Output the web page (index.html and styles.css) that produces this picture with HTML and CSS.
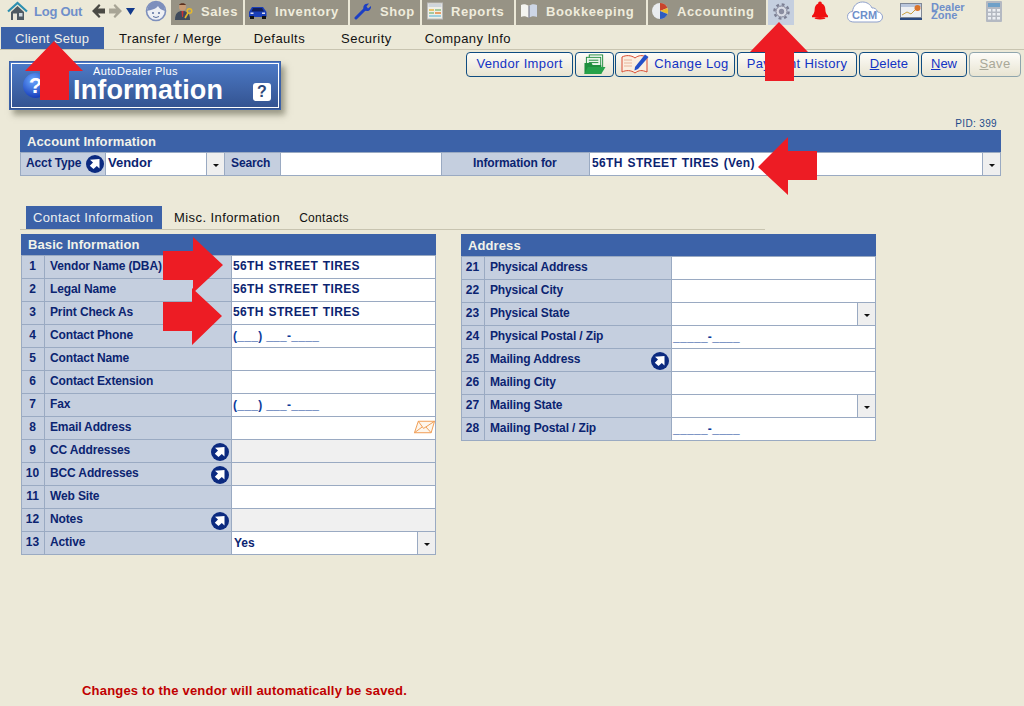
FILE: index.html
```html
<!DOCTYPE html>
<html lang="en">
<head>
<meta charset="utf-8">
<title>Information</title>
<link rel="stylesheet" href="styles.css">
</head>
<body>
<svg class="defs" width="0" height="0" aria-hidden="true">
  <symbol id="go" viewBox="0 0 18 18">
    <circle cx="9" cy="9" r="9" fill="#0b2a80"/>
    <path d="M4 4.800 L13.500 4 L13.500 13.500 L10.800 11 L7.500 14 L3.800 10.800 L7 7.500 Z" fill="#fff"/>
  </symbol>
</svg>

<header class="topbar">
  <svg class="ic-house" width="21" height="20" viewBox="0 0 21 20"><path d="M1 10.500 L10.500 2 L20 10.500" fill="none" stroke="#2c8fb0" stroke-width="2.200"/><path d="M4 11 L10.500 5 L17 11 V19 H4 Z" fill="#4e5a63"/><rect x="6" y="12.500" width="4" height="6.500" fill="#e8e6da"/><rect x="12" y="12" width="3.500" height="3.500" fill="#cfd8e0"/></svg>
  <span class="logout">Log Out</span>
  <svg class="ic-nav" width="44" height="16" viewBox="0 0 44 16"><path d="M0 8 L7 1 L8.500 2.500 L6 5.500 H13 V10.500 H6 L8.500 13.500 L7 15 Z" fill="#4a4a44"/><path d="M30 8 L23 1 L21.500 2.500 L24 5.500 H17 V10.500 H24 L21.500 13.500 L23 15 Z" fill="#a8a596"/><path d="M34 5 H43 L38.500 12 Z" fill="#123a8c"/></svg>
  <svg class="ic-face" width="22" height="22" viewBox="0 0 22 22"><circle cx="11" cy="11" r="9.500" fill="#eef0f4" stroke="#7d8fbc" stroke-width="1.600"/><path d="M2 11 C3 3 9 1 12 2 C17 2 20 6 20 11 C16 10 14 8 13 6 C11 9 6 10 2 11 Z" fill="#7d8fbc"/><circle cx="8" cy="13" r="1" fill="#5a6f9f"/><circle cx="14" cy="13" r="1" fill="#5a6f9f"/><path d="M8 16.500 Q11 18.500 14 16.500" stroke="#5a6f9f" fill="none"/></svg>

  <nav class="tiles">
    <a class="tile tile-sales"><svg width="18" height="18" viewBox="0 0 18 18"><circle cx="7.500" cy="5" r="3.500" fill="#c89a74"/><path d="M4 3 C5 0.500 10 0.500 11 3 Z" fill="#5a3020"/><path d="M0 18 C0 11 3 9 7.500 9 C12 9 15 11 15 18 Z" fill="#3e4a5c"/><path d="M6.500 9 H8.500 L8 15 H7 Z" fill="#c33"/><circle cx="14.500" cy="9" r="2.300" fill="none" stroke="#e5b82c" stroke-width="1.500"/><path d="M13 11 L10 16" stroke="#e5b82c" stroke-width="1.600"/></svg><span>Sales</span></a>
    <a class="tile tile-inventory"><svg width="18" height="18" viewBox="0 0 18 18"><path d="M0 10 L3 5 H14 L17.500 10 V15 H0 Z" fill="#1a3fb8"/><path d="M4 6 H13 L15 9.500 H2.500 Z" fill="#14205a"/><rect x="1" y="14" width="4" height="3" fill="#111"/><rect x="13" y="14" width="4" height="3" fill="#111"/><rect x="1.500" y="10.500" width="3" height="1.500" fill="#dde"/><rect x="13" y="10.500" width="3" height="1.500" fill="#dde"/></svg><span>Inventory</span></a>
    <a class="tile tile-shop"><svg width="18" height="18" viewBox="0 0 18 18"><path d="M2 16 L11 7" stroke="#1c3fc4" stroke-width="3" stroke-linecap="round"/><path d="M10 8 C8 4 11 1 15 1.500 L12.500 4.500 L14 6.500 L17 4 C17.500 8 14 10.500 10 8 Z" fill="#1c3fc4"/></svg><span>Shop</span></a>
    <a class="tile tile-reports"><svg width="16" height="18" viewBox="0 0 16 18"><rect x="0.500" y="1" width="15" height="16" fill="#f0efe6" stroke="#bbb"/><rect x="1.500" y="2" width="13" height="3" fill="#cfd5dc"/><rect x="2" y="7" width="5" height="2" fill="#e9c46a"/><rect x="8" y="7" width="6" height="2" fill="#a6c9a0"/><rect x="2" y="10" width="5" height="2" fill="#a6c9a0"/><rect x="8" y="10" width="6" height="2" fill="#e9a06a"/><rect x="2" y="13" width="12" height="2" fill="#9ecfe0"/></svg><span>Reports</span></a>
    <a class="tile tile-book"><svg width="18" height="18" viewBox="0 0 18 18"><path d="M9 4 C6 2 3 2 1 3 V15 C3 14 6 14 9 16 Z" fill="#f4f4f0"/><path d="M9 4 C11 2 14 1.500 17 3 V15 C14 13.500 11 14 9 16 Z" fill="#cdd6e6"/><path d="M9 4 V16" stroke="#667" stroke-width="1"/></svg><span>Bookkeeping</span></a>
    <a class="tile tile-acct"><svg width="18" height="18" viewBox="0 0 18 18"><circle cx="9" cy="9" r="8" fill="#e9ecef"/><path d="M9 9 V1 A8 8 0 0 1 16.500 6 Z" fill="#c8442c"/><path d="M9 9 L16.500 6 A8 8 0 0 1 16.500 12 Z" fill="#e8bc2c"/><path d="M9 9 L16.500 12 A8 8 0 0 1 9 17 Z" fill="#2c5cc0"/></svg><span>Accounting</span></a>
    <a class="tile-gear"><svg width="19" height="19" viewBox="0 0 20 20"><circle cx="10" cy="10" r="7.500" fill="none" stroke="#7c7f93" stroke-width="2.400" stroke-dasharray="3 2.890"/><circle cx="10" cy="10" r="5.800" fill="#d8dbe4" stroke="#7c7f93"/><circle cx="10" cy="10" r="2.800" fill="#8a8da0"/></svg></a>
  </nav>

  <svg class="ic-bell" width="16" height="19" viewBox="0 0 18 20"><path d="M9 0 C10.500 0 11 1 11 2 C14 3 15 6 15 9 C15 12 16 14 18 16 V17.500 H0 V16 C2 14 3 12 3 9 C3 6 4 3 7 2 C7 1 7.500 0 9 0 Z" fill="#f01010"/><ellipse cx="9" cy="18.700" rx="6" ry="1.300" fill="#f01010"/></svg>
  <span class="crm"><svg width="36" height="22" viewBox="0 0 36 22"><path d="M7 21 C2 21 0.500 18 0.500 15.500 C0.500 12.500 3 10.500 5.500 10.500 C6 5 10 1 15.500 1 C20 1 23.500 3.500 25 7 C27 6.500 30 8 30.500 11 C33.500 11 35.500 13.500 35.500 16 C35.500 19 33 21 30 21 Z" fill="#fff" stroke="#8ea0cc"/></svg><b>CRM</b></span>
  <svg class="ic-zone" width="22" height="17" viewBox="0 0 22 17"><rect x="0.500" y="0.500" width="21" height="14" fill="#eef0f2" stroke="#7f8896"/><rect y="15" width="22" height="2" fill="#2b4a80"/><rect x="1" y="1" width="20" height="3" fill="#b9c6dc"/><path d="M2 12 L7 9 L11 11 L16 6" stroke="#c9a040" fill="none"/><circle cx="17.500" cy="5" r="3" fill="#d9742c"/></svg>
  <span class="zone">Dealer<br>Zone</span>
  <svg class="ic-calc" width="16" height="21" viewBox="0 0 16 21"><rect width="16" height="21" rx="1" fill="#b4b9c2"/><rect x="2" y="2" width="12" height="4" fill="#6fa0c8"/><g fill="#eceff3"><rect x="2" y="8" width="3" height="2.500"/><rect x="6.500" y="8" width="3" height="2.500"/><rect x="11" y="8" width="3" height="2.500"/><rect x="2" y="12" width="3" height="2.500"/><rect x="6.500" y="12" width="3" height="2.500"/><rect x="11" y="12" width="3" height="2.500"/><rect x="2" y="16" width="3" height="2.500"/><rect x="6.500" y="16" width="3" height="2.500"/><rect x="11" y="16" width="3" height="2.500"/></g></svg>
</header>

<nav class="subnav">
  <a class="subtab subtab-on">Client Setup</a>
  <a class="subtab">Transfer / Merge</a>
  <a class="subtab">Defaults</a>
  <a class="subtab">Security</a>
  <a class="subtab">Company Info</a>
</nav>

<section class="titlerow">
  <div class="banner">
    <svg class="banner-ball" width="25" height="25" viewBox="0 0 25 25"><defs><radialGradient id="ball" cx=".4" cy=".3" r=".8"><stop offset="0" stop-color="#6aa8ff"/><stop offset="1" stop-color="#0c2fb0"/></radialGradient></defs><circle cx="12.500" cy="12.500" r="12.500" fill="url(#ball)"/><text x="12.500" y="20" text-anchor="middle" class="ball-q">?</text></svg>
    <div class="banner-text">
      <span class="banner-sub">AutoDealer Plus</span>
      <span class="banner-main">Information</span>
    </div>
    <span class="banner-help">?</span>
  </div>
  <div class="toolbar">
    <button class="btn btn-import"><span>Vendor Import</span></button>
    <button class="btn btn-folder"><svg width="22" height="21" viewBox="0 0 23 21"><rect x="5.500" y="0.500" width="14" height="13" fill="#fff" stroke="#1e8a3c"/><rect x="2.500" y="3" width="15" height="12" fill="#eaf6ea" stroke="#1e8a3c"/><path d="M5 6 H15 M5 8.500 H15" stroke="#1e8a3c"/><path d="M0.500 9 H8 L9 11 H18 V20.500 H0.500 Z" fill="#1f8f3e"/><path d="M4 13 H22.500 L18 20.500 H0.500 Z" fill="#27a24a"/></svg></button>
    <button class="btn btn-log"><svg width="28" height="21" viewBox="0 0 28 21"><path d="M1 4 C5 2 10 2 14 5 C18 2 21 2 26 4 V19 C21 17 18 17 14 20 C10 17 5 17 1 19 Z" fill="#fbeee0" stroke="#d94a30"/><path d="M3 7 H11 M3 10 H11 M3 13 H11" stroke="#e8b49a"/><path d="M14 14 L24 1.500 L27.500 4 L17 16 L13.500 17.500 Z" fill="#2450c8"/></svg><span>Change Log</span></button>
    <button class="btn btn-pay"><span>Payment History</span></button>
    <button class="btn btn-del"><span><u>D</u>elete</span></button>
    <button class="btn btn-new"><span><u>N</u>ew</span></button>
    <button class="btn btn-save"><span><u>S</u>ave</span></button>
  </div>
</section>

<p class="pid">PID: 399</p>

<section class="account">
  <h2 class="bar bar-acct">Account Information</h2>
  <div class="acct-grid">
    <div class="cell acct-type">Acct Type<svg class="go go-acct" width="18" height="18"><use href="#go"/></svg></div>
    <div class="val val-sel">Vendor</div>
    <div class="dd"><i></i></div>
    <div class="cell acct-search">Search</div>
    <div class="val"></div>
    <div class="cell acct-for">Information for</div>
    <div class="val val-sel val-name">56TH STREET TIRES (Ven)</div>
    <div class="dd"><i></i></div>
  </div>
</section>

<nav class="tabs">
  <a class="tab tab-on">Contact Information</a>
  <a class="tab tab-misc">Misc. Information</a>
  <a class="tab tab-contacts">Contacts</a>
</nav>

<main class="forms">
  <section class="form form-basic">
    <h2 class="bar bar-basic">Basic Information</h2>
    <div class="grid">
      <div class="num">1</div><div class="lab">Vendor Name (DBA)</div><div class="val val-name">56TH STREET TIRES</div>
      <div class="num">2</div><div class="lab">Legal Name</div><div class="val val-name">56TH STREET TIRES</div>
      <div class="num">3</div><div class="lab">Print Check As</div><div class="val val-name">56TH STREET TIRES</div>
      <div class="num">4</div><div class="lab">Contact Phone</div><div class="val val-mask">(___) ___-____</div>
      <div class="num">5</div><div class="lab">Contact Name</div><div class="val"></div>
      <div class="num">6</div><div class="lab">Contact Extension</div><div class="val"></div>
      <div class="num">7</div><div class="lab">Fax</div><div class="val val-mask">(___) ___-____</div>
      <div class="num">8</div><div class="lab">Email Address</div><div class="val val-mail"><svg width="21" height="14" viewBox="0 0 22 14"><path d="M4.500 1 H21.500 L18 13 H0.500 Z" fill="#fdf6ec" stroke="#ef9a50"/><path d="M4.500 1 L10 8.500 L21.500 1 M0.500 13 L8.500 7 M18 13 L12.500 7" fill="none" stroke="#ef9a50"/></svg></div>
      <div class="num">9</div><div class="lab lab-go">CC Addresses<svg class="go" width="18" height="18"><use href="#go"/></svg></div><div class="val val-off"></div>
      <div class="num">10</div><div class="lab lab-go">BCC Addresses<svg class="go" width="18" height="18"><use href="#go"/></svg></div><div class="val val-off"></div>
      <div class="num">11</div><div class="lab">Web Site</div><div class="val"></div>
      <div class="num">12</div><div class="lab lab-go">Notes<svg class="go" width="18" height="18"><use href="#go"/></svg></div><div class="val val-off"></div>
      <div class="num">13</div><div class="lab">Active</div><div class="val val-select"><span>Yes</span><div class="dd"><i></i></div></div>
    </div>
  </section>

  <section class="form form-addr">
    <h2 class="bar bar-addr">Address</h2>
    <div class="grid">
      <div class="num">21</div><div class="lab">Physical Address</div><div class="val"></div>
      <div class="num">22</div><div class="lab">Physical City</div><div class="val"></div>
      <div class="num">23</div><div class="lab">Physical State</div><div class="val val-select"><span></span><div class="dd"><i></i></div></div>
      <div class="num">24</div><div class="lab">Physical Postal / Zip</div><div class="val val-mask">_____-____</div>
      <div class="num">25</div><div class="lab lab-go">Mailing Address<svg class="go" width="18" height="18"><use href="#go"/></svg></div><div class="val"></div>
      <div class="num">26</div><div class="lab">Mailing City</div><div class="val"></div>
      <div class="num">27</div><div class="lab">Mailing State</div><div class="val val-select"><span></span><div class="dd"><i></i></div></div>
      <div class="num">28</div><div class="lab">Mailing Postal / Zip</div><div class="val val-mask">_____-____</div>
    </div>
  </section>
</main>

<p class="notice">Changes to the vendor will automatically be saved.</p>

<svg class="callouts" width="1024" height="706" viewBox="0 0 1024 706" aria-hidden="true">
  <g fill="#ed1c24">
    <polygon points="54,41 83,71 69,71 69,100 40,100 40,71 25,71"/>
    <polygon points="779,22 808,52 794,52 794,81 765,81 765,52 750,52"/>
    <polygon points="758,167 788,137 788,151 817,151 817,180 788,180 788,195"/>
    <polygon points="223,265 193,237 193,251 163,251 163,280 193,280 193,293"/>
    <polygon points="222,316 192,288 192,302 163,302 163,331 192,331 192,345"/>
  </g>
</svg>
</body>
</html>
```

FILE: styles.css
```css
* { box-sizing: border-box; }
html, body { margin: 0; padding: 0; }
body {
  position: relative;
  width: 1024px;
  height: 706px;
  overflow: hidden;
  background: #ece9d8;
  font-family: "Liberation Sans", Arial, sans-serif;
  font-size: 12px;
  color: #0b2471;
}
.defs { position: absolute; }
h2, p { margin: 0; }

/* top bar */
.topbar { display: flex; align-items: center; height: 25px; padding-left: 7px; }
.ic-house { flex: none; margin-bottom: 3px; }
.logout { flex: none; margin-left: 6px; width: 52px; font-size: 13px; font-weight: bold; letter-spacing: -0.25px; color: #6f8fca; margin-bottom: 3px; white-space: nowrap; }
.ic-nav { flex: none; margin-left: 6px; margin-bottom: 3px; }
.ic-face { flex: none; margin-left: 9px; margin-bottom: 3px; }
.tiles { display: flex; gap: 2px; margin-left: 4px; height: 25px; }
.tile {
  display: flex;
  align-items: center;
  gap: 8px;
  padding: 0 0 3px 4px;
  height: 25px;
  background: #979385;
  color: #efecdc;
  font-size: 13px;
  font-weight: bold;
  letter-spacing: 0.6px;
}
.tile-sales { width: 72px; }
.tile-inventory { width: 103px; }
.tile-shop { width: 70px; }
.tile-reports { width: 92px; padding-left: 5px; }
.tile-book { width: 130px; }
.tile-acct { width: 118px; padding-left: 3px; }
.tile-gear {
  display: flex;
  align-items: center;
  justify-content: center;
  width: 26px;
  height: 25px;
  padding-bottom: 3px;
  background: #c5cfdf;
}
.ic-bell { flex: none; margin-left: 18px; margin-bottom: 4px; }
.crm { position: relative; flex: none; margin-left: 19px; width: 36px; height: 24px; }
.crm svg { display: block; }
.crm b { position: absolute; left: 5px; top: 8px; font-size: 11px; color: #6f8fca; }
.ic-zone { flex: none; margin-left: 17px; margin-bottom: 3px; }
.zone { flex: none; margin-left: 9px; width: 55px; font-size: 11px; font-weight: bold; line-height: 8px; color: #6f8fca; margin-bottom: 4px; }
.ic-calc { flex: none; margin-bottom: 3px; }

/* sub nav */
.subnav {
  display: flex;
  gap: 1px;
  height: 23px;
  margin-top: 2px;
  padding-left: 1px;
  border-bottom: 1px solid #c8c4b0;
}
.subtab {
  height: 22px;
  padding: 0 14px;
  font-size: 13px;
  line-height: 23px;
  letter-spacing: 0.45px;
  color: #111;
}
.subtab:nth-child(3) { margin-left: 3px; }
.subtab:nth-child(4) { margin-left: 7px; }
.subtab:nth-child(5) { margin-left: 4px; }
.subtab-on { width: 103px; background: #3c62a8; color: #f0f0e8; letter-spacing: 0.28px; white-space: nowrap; }

/* title row */
.titlerow { display: flex; align-items: flex-start; height: 60px; }
.banner {
  display: flex;
  align-items: center;
  position: relative;
  width: 272px;
  height: 49px;
  margin: 11px 0 0 9px;
  padding-left: 13px;
  background: linear-gradient(#4d7bc8, #33528f);
  border: 1px solid #3c62a8;
  outline: 1px solid #fff;
  outline-offset: -3px;
  box-shadow: 4px 5px 6px rgba(90, 90, 70, .55);
  color: #fff;
}
.banner-ball { flex: none; }
.ball-q { fill: #fff; font-size: 22px; font-weight: bold; }
.banner-text { display: flex; flex-direction: column; margin-left: 25px; margin-top: -1px; }
.banner-sub { font-size: 11px; line-height: 11px; margin-left: 20px; letter-spacing: .35px; }
.banner-main { font-size: 27px; font-weight: bold; line-height: 27px; letter-spacing: .15px; }
.banner-help {
  position: absolute;
  right: 9px;
  top: 21px;
  width: 18px;
  height: 18px;
  border-radius: 3px;
  background: #fff;
  color: #2d4778;
  font-size: 16px;
  font-weight: bold;
  line-height: 18px;
  text-align: center;
}
.toolbar { display: flex; gap: 2px; margin: 2px 3px 0 auto; }
.btn {
  display: flex;
  align-items: center;
  justify-content: center;
  gap: 5px;
  height: 25px;
  padding: 0 0 2px;
  border: 1.5px solid #0f4c81;
  border-radius: 4px;
  background: linear-gradient(#fdfcf8, #e8e4d2);
  color: #1233c4;
  font-family: inherit;
  font-size: 13px;
  letter-spacing: 0.35px;
}
.btn-import { width: 107px; }
.btn-folder { width: 39px; padding: 0; }
.btn-log { width: 120px; margin-left: -1px; }
.btn-pay { width: 120px; }
.btn-del { width: 60px; letter-spacing: .15px; }
.btn-new { width: 46px; letter-spacing: 0; }
.btn-save { width: 52px; color: #a9a898; border-color: #8fa5ad; }

.pid { height: 20px; padding: 8px 27px 0 0; text-align: right; font-size: 10px; line-height: 12px; color: #1d4a8a; letter-spacing: .35px; }

/* account block */
.account { margin-left: 20px; width: 981px; }
.bar {
  background: #3c62a8;
  color: #f2f2ea;
  font-size: 13px;
  font-weight: bold;
  padding-left: 7px;
  letter-spacing: 0.1px;
}
.bar-acct { height: 22px; line-height: 23px; }
.bar-basic { height: 21px; line-height: 22px; }
.bar-addr { height: 22px; line-height: 23px; }
.acct-grid {
  display: grid;
  grid-template-columns: 84px 100px 17px 55px 160px 147px 392px 17px;
  gap: 1px;
  padding: 1px;
  background: #9aaac2;
}
.cell { background: #c5cfdf; display: flex; align-items: center; font-weight: bold; height: 22px; line-height: 20px; letter-spacing: -0.12px; padding-bottom: 2px; }
.acct-type { padding-left: 5px; white-space: nowrap; }
.go-acct { flex: none; margin-left: 5px; margin-top: 2px; }
.acct-search { padding-left: 6px; }
.acct-for { padding-left: 31px; }
.val { background: #fff; height: 22px; font-weight: bold; line-height: 20px; padding-left: 1px; color: #0b2471; }
.val-sel { padding-left: 2px; font-size: 13px; }
.val-name { letter-spacing: 0.37px; word-spacing: 1px; }
.val-sel.val-name { font-size: 12px; padding-left: 2px; }
.dd { background: #efefef; height: 22px; display: flex; align-items: center; justify-content: center; }
.dd i { display: block; width: 0; height: 0; border: 3px solid transparent; border-top-color: #111; border-bottom-width: 0; margin-top: 2px; }

/* content tabs */
.tabs {
  display: flex;
  width: 745px;
  height: 24px;
  margin: 30px 0 0 20px;
  padding-left: 6px;
  border-bottom: 1px solid #c8c4b0;
}
.tab {
  height: 23px;
  padding: 0 8px;
  font-size: 13px;
  line-height: 23px;
  color: #111;
}
.tab-on { width: 136px; margin-right: 4px; padding: 0 7px; background: #3c62a8; color: #eef0f0; letter-spacing: 0.36px; white-space: nowrap; }
.tab-misc { letter-spacing: 0.42px; }
.tab-contacts { font-size: 12px; line-height: 24px; letter-spacing: 0.3px; margin-left: 3px; }

/* forms */
.forms { display: flex; align-items: flex-start; gap: 25px; margin: 4px 0 0 21px; }
.form { width: 415px; }
.grid {
  display: grid;
  grid-template-columns: 22px 186px 203px;
  grid-auto-rows: 22px;
  gap: 1px;
  padding: 1px;
  background: #9aaac2;
}
.num, .lab { background: #c5cfdf; font-weight: bold; line-height: 20px; }
.num { text-align: center; padding-right: 1px; }
.lab { padding-left: 5px; letter-spacing: -0.13px; }
.lab-go { display: flex; justify-content: space-between; padding-right: 2px; }
.lab-go .go { margin-top: 3px; }
.val-mask { color: #0d3a9a; padding-top: 1px; letter-spacing: 0.3px; }
.val-mail { display: flex; justify-content: flex-end; padding-top: 3px; }
.val-off { background: #f0f0f0; }
.val-select { display: flex; justify-content: space-between; padding-left: 0; line-height: 22px; }
.val-select span { padding-left: 2px; }
.val-select .dd { width: 18px; border-left: 1px solid #9aaac2; }

.notice { margin: 129px 0 0 82px; color: #c00000; font-size: 13px; font-weight: bold; line-height: 14px; letter-spacing: .2px; }

.callouts { position: absolute; left: 0; top: 0; pointer-events: none; }
```
